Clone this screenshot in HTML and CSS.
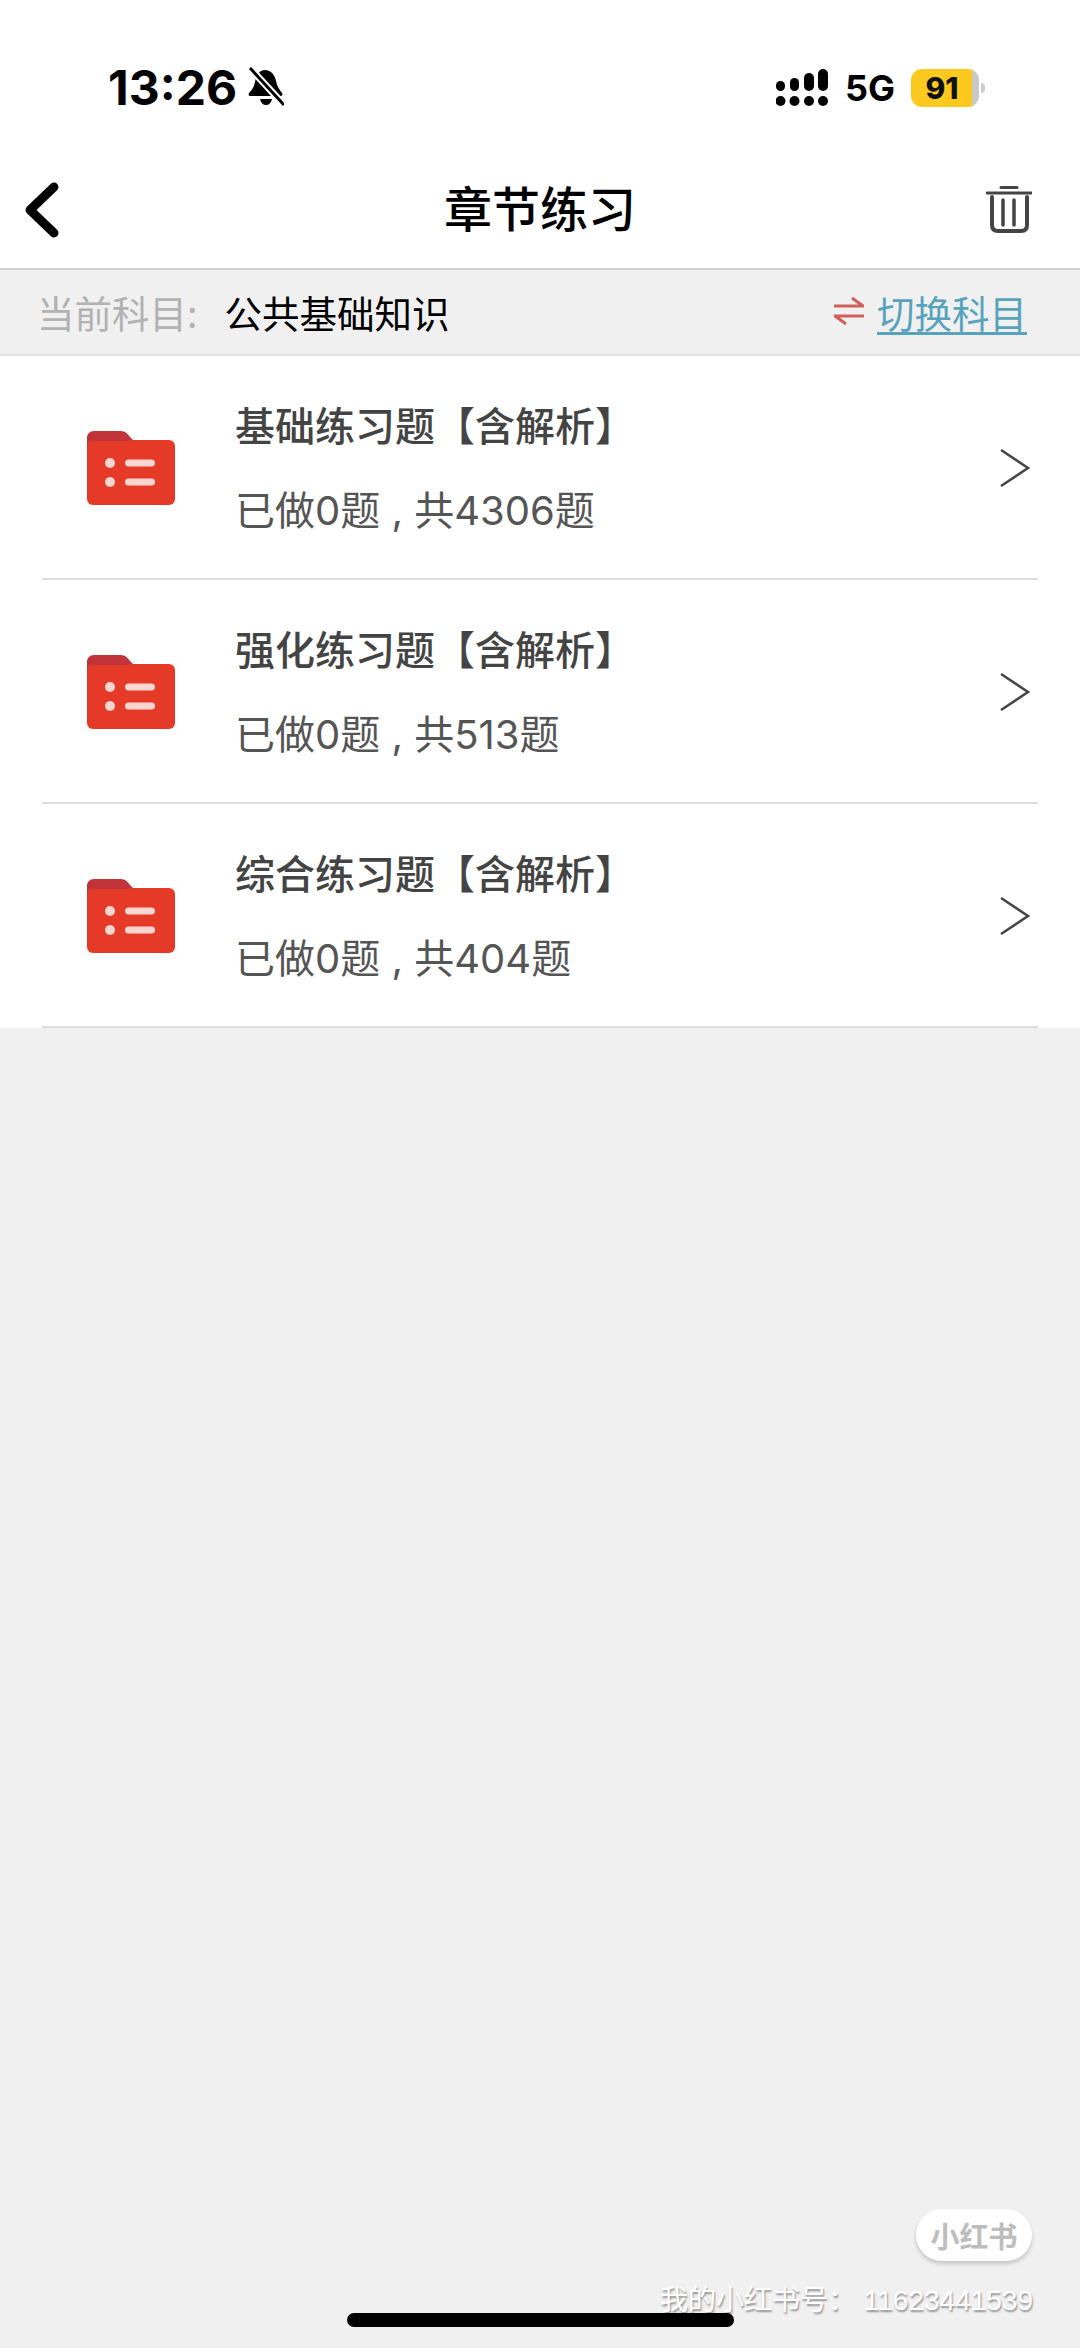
FILE: index.html
```html
<!DOCTYPE html>
<html lang="zh-CN">
<head>
  <meta charset="UTF-8">
  <title>章节练习</title>
  <link rel="stylesheet" href="styles.css">
</head>
<body>
  <div class="page">
    <div class="status-bar">
      <div class="status-left">
        <span class="time">13:26</span>
        <svg class="bell" viewBox="0 0 36 40" width="36" height="40">
          <path d="M17 3c6 0 10 5 11 11 1 5 3 8 6 12 1 2 0 3-2 3H3c-2 0-3-1-2-3 3-3 5-6 6-11 1-6 4-12 10-12z" fill="#000"/>
          <path d="M12 32h12c-1 4-3 6-6 6s-5-2-6-6z" fill="#000"/>
          <path d="M2 1l34 37" stroke="#fff" stroke-width="7"/>
          <path d="M2 1l34 37" stroke="#000" stroke-width="3"/>
        </svg>
      </div>
      <div class="status-right">
        <svg class="signal" viewBox="0 0 52 38" width="52" height="38">
          <g fill="#000">
            <rect x="0" y="12" width="9" height="10" rx="4.5"/><circle cx="4.500" cy="32" r="5"/>
            <rect x="14" y="9" width="9" height="13" rx="4.5"/><circle cx="18.500" cy="32" r="5"/>
            <rect x="28" y="4" width="10" height="18" rx="5"/><circle cx="33" cy="32" r="5"/>
            <rect x="42" y="0" width="10" height="22" rx="5"/><circle cx="47" cy="32" r="5"/>
          </g>
        </svg>
        <span class="net">5G</span>
        <div class="battery"><span class="battery-num">91</span></div>
        <span class="battery-tip"></span>
      </div>
    </div>

    <header class="nav">
      <svg class="back" viewBox="0 0 36 56" width="36" height="56">
        <path d="M30 5L6 28l24 23" fill="none" stroke="#000" stroke-width="9" stroke-linecap="round" stroke-linejoin="round"/>
      </svg>
      <h1 class="nav-title">章节练习</h1>
      <svg class="trash" viewBox="0 0 46 47" width="46" height="47">
        <g fill="none" stroke="#444" stroke-linecap="round">
          <path d="M1 7h44" stroke-width="3"/>
          <path d="M15 1.500h16" stroke-width="3"/>
          <path d="M6 11v28c0 4 2 6 6 6h23c4 0 6-2 6-6V11" stroke-width="4"/>
          <path d="M17 14v25M28 14v25" stroke-width="3.500"/>
        </g>
      </svg>
    </header>

    <div class="subject-bar">
      <div class="subject">
        <span class="subject-label">当前科目:</span>
        <span class="subject-name">公共基础知识</span>
      </div>
      <div class="switch">
        <svg class="switch-icon" viewBox="0 0 30 28" width="30" height="28">
          <g fill="none" stroke="#d0605a" stroke-width="3">
            <path d="M0 9h29L18 1"/>
            <path d="M30 19H1l11 8"/>
          </g>
        </svg>
        <a class="switch-link">切换科目</a>
      </div>
    </div>

    <ul class="list">
      <li class="row">
        <svg class="folder" viewBox="0 0 88 76" width="88" height="76">
          <path d="M0 8c0-4 3-7 7-7h26c5 0 7 2 10 6l3 3H20L0 20z" fill="#c1343a"/>
          <rect x="0" y="10" width="88" height="65" rx="6" fill="#e53a27"/>
          <path d="M0 12c0-4 3-5 6-5h35l4 4H0z" fill="#c1343a"/>
          <g fill="#fbd5cf">
            <circle cx="23" cy="33" r="5"/><circle cx="23" cy="52" r="5"/>
            <rect x="38" y="29.500" width="30" height="7" rx="3.500"/><rect x="38" y="48.500" width="30" height="7" rx="3.500"/>
          </g>
        </svg>
        <div class="row-text">
          <div class="row-title">基础练习题【含解析】</div>
          <div class="row-sub">已做0题 , 共4306题</div>
        </div>
        <svg class="chevron" viewBox="0 0 32 40" width="32" height="40">
          <path d="M2 2l27 18L2 38" fill="none" stroke="#444" stroke-width="2.500"/>
        </svg>
      </li>
      <li class="row">
        <svg class="folder" viewBox="0 0 88 76" width="88" height="76">
          <path d="M0 8c0-4 3-7 7-7h26c5 0 7 2 10 6l3 3H20L0 20z" fill="#c1343a"/>
          <rect x="0" y="10" width="88" height="65" rx="6" fill="#e53a27"/>
          <path d="M0 12c0-4 3-5 6-5h35l4 4H0z" fill="#c1343a"/>
          <g fill="#fbd5cf">
            <circle cx="23" cy="33" r="5"/><circle cx="23" cy="52" r="5"/>
            <rect x="38" y="29.500" width="30" height="7" rx="3.500"/><rect x="38" y="48.500" width="30" height="7" rx="3.500"/>
          </g>
        </svg>
        <div class="row-text">
          <div class="row-title">强化练习题【含解析】</div>
          <div class="row-sub">已做0题 , 共513题</div>
        </div>
        <svg class="chevron" viewBox="0 0 32 40" width="32" height="40">
          <path d="M2 2l27 18L2 38" fill="none" stroke="#444" stroke-width="2.500"/>
        </svg>
      </li>
      <li class="row">
        <svg class="folder" viewBox="0 0 88 76" width="88" height="76">
          <path d="M0 8c0-4 3-7 7-7h26c5 0 7 2 10 6l3 3H20L0 20z" fill="#c1343a"/>
          <rect x="0" y="10" width="88" height="65" rx="6" fill="#e53a27"/>
          <path d="M0 12c0-4 3-5 6-5h35l4 4H0z" fill="#c1343a"/>
          <g fill="#fbd5cf">
            <circle cx="23" cy="33" r="5"/><circle cx="23" cy="52" r="5"/>
            <rect x="38" y="29.500" width="30" height="7" rx="3.500"/><rect x="38" y="48.500" width="30" height="7" rx="3.500"/>
          </g>
        </svg>
        <div class="row-text">
          <div class="row-title">综合练习题【含解析】</div>
          <div class="row-sub">已做0题 , 共404题</div>
        </div>
        <svg class="chevron" viewBox="0 0 32 40" width="32" height="40">
          <path d="M2 2l27 18L2 38" fill="none" stroke="#444" stroke-width="2.500"/>
        </svg>
      </li>
    </ul>

    <div class="watermark">
      <div class="wm-badge">小红书</div>
      <div class="wm-id">我的小红书号： 11623441539</div>
    </div>
    <div class="home-bar"></div>
  </div>
</body>
</html>
```

FILE: styles.css
```css
* {
  box-sizing: border-box;
}
html, body {
  margin: 0;
  padding: 0;
}
body {
  font-family: "Noto Sans CJK SC", "Liberation Sans", sans-serif;
  background: #f0f0f0;
}
.page {
  position: relative;
  width: 1080px;
  height: 2348px;
  overflow: hidden;
  background: #f0f0f0;
}

/* status bar */
.status-bar {
  height: 130px;
  padding: 66px 0 0 108px;
  background: #fff;
  display: flex;
  justify-content: space-between;
  align-items: flex-start;
}
.status-left {
  display: flex;
  align-items: center;
  gap: 11px;
}
.time {
  font-family: Inter, "Liberation Sans", sans-serif;
  font-size: 48px;
  line-height: 44px;
  font-weight: 700;
  color: #000;
}
.bell {
  margin-top: -2px;
}
.status-right {
  display: flex;
  align-items: center;
  margin-right: 95px;
  margin-top: 3px;
}
.signal {
  margin-right: 17px;
}
.net {
  font-family: Inter, "Liberation Sans", sans-serif;
  font-size: 36px;
  line-height: 38px;
  font-weight: 700;
  color: #000;
  margin-right: 16px;
}
.battery {
  width: 68px;
  height: 38px;
  border-radius: 11px;
  background: linear-gradient(to right, #fdc91f 90%, #c9c9c9 90%);
  display: flex;
  align-items: center;
  justify-content: center;
  padding-right: 6px;
}
.battery-num {
  font-family: Inter, "Liberation Sans", sans-serif;
  font-size: 30px;
  font-weight: 800;
  color: #111;
}
.battery-tip {
  width: 4px;
  height: 10px;
  margin-left: 2px;
  border-radius: 0 4px 4px 0;
  background: #ccc;
}

/* nav */
.nav {
  height: 140px;
  padding: 14px 24px 0;
  background: #fff;
  border-bottom: 2px solid #d0d0d0;
  display: grid;
  grid-template-columns: 1fr auto 1fr;
  align-items: center;
}
.nav-title {
  margin: 0;
  font-size: 48px;
  font-weight: 500;
  color: #000;
  line-height: 60px;
}
.back {
  margin-top: 8px;
}
.trash {
  justify-self: end;
  margin: 6px 24px 0 0;
}

/* subject bar */
.subject-bar {
  height: 86px;
  padding: 0 53px 2px 37px;
  background: #f0f0f1;
  border-bottom: 2px solid #e2e2e2;
  display: flex;
  align-items: center;
  justify-content: space-between;
  font-size: 37.500px;
}
.subject {
  display: flex;
  align-items: center;
  gap: 27px;
}
.subject-label {
  color: #b2b2b2;
}
.subject-name {
  color: #000;
}
.switch {
  display: flex;
  align-items: center;
  gap: 13px;
}
.switch-link {
  color: #58a3bb;
  text-decoration: underline;
  text-decoration-thickness: 3px;
  text-underline-offset: 4px;
}

/* list */
.list {
  list-style: none;
  margin: 0;
  padding: 0;
  background: #fff;
}
.row {
  height: 224px;
  margin: 0;
  padding: 0 42px;
  position: relative;
  display: flex;
  align-items: center;
}
.row::after {
  content: "";
  position: absolute;
  left: 42px;
  right: 42px;
  bottom: 0;
  height: 2px;
  background: #dedede;
}
.folder {
  margin-left: 45px;
  flex: none;
}
.row-text {
  margin-left: 60px;
  padding-top: 2px;
  flex: 1;
  display: flex;
  flex-direction: column;
  gap: 28px;
  font-family: Inter, "Noto Sans CJK SC", sans-serif;
}
.row-title {
  font-size: 40px;
  line-height: 56px;
  font-weight: 500;
  color: #444;
}
.row-sub {
  font-size: 40px;
  line-height: 56px;
  color: #555;
}
.chevron {
  flex: none;
  margin-right: 7px;
}

/* watermark, sits on top of the page */
.watermark {
  position: absolute;
  right: 0;
  top: 2208px;
  width: 440px;
  height: 110px;
}
.wm-badge {
  position: absolute;
  right: 48px;
  top: 1px;
  width: 116px;
  height: 52px;
  border-radius: 26px;
  background: #fff;
  box-shadow: 0 3px 4px rgba(0,0,0,0.18);
  color: #bdbdbd;
  font-size: 29px;
  font-weight: 700;
  line-height: 52px;
  text-align: center;
}
.wm-id {
  position: absolute;
  left: 20px;
  top: 76px;
  white-space: nowrap;
  font-family: "Liberation Sans", "Noto Sans CJK SC", sans-serif;
  font-size: 28px;
  line-height: 34px;
  color: #fff;
  text-shadow: 1px 2px 2px rgba(0,0,0,0.4);
}
.home-bar {
  position: absolute;
  left: 347px;
  top: 2313px;
  width: 387px;
  height: 14px;
  border-radius: 7px;
  background: #000;
}
```
